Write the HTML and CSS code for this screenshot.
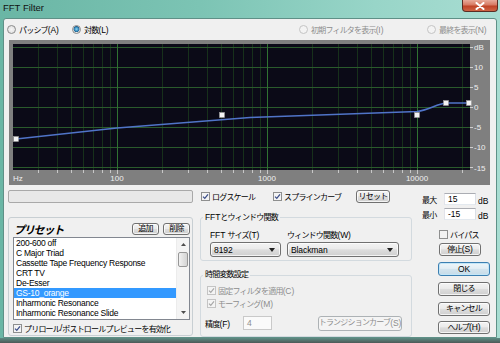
FILE: index.html
```html
<!DOCTYPE html>
<html lang="ja">
<head>
<meta charset="utf-8">
<title>FFT Filter</title>
<link rel="stylesheet" href="styles.css">
</head>
<body>
<div class="window">
  <div class="titlebar">
    <span class="title">FFT Filter</span>
    <span class="close"><svg width="12" height="8" viewBox="0 0 12 8"><path d="M2.5 1 L9.5 7 M9.5 1 L2.5 7" stroke="#fff" stroke-width="2" stroke-linecap="round"/></svg></span>
  </div>
  <div class="client">
    <div class="radio-row">
      <label class="opt r1"><span class="radio"></span>パッシブ<span class="en">(A)</span></label>
      <label class="opt r2"><span class="radio on"></span>対数<span class="en">(L)</span></label>
      <label class="opt r3 dis"><span class="radio off"></span>初期フィルタを表示<span class="en">(I)</span></label>
      <label class="opt r4 dis"><span class="radio off"></span>最終を表示<span class="en">(N)</span></label>
    </div>
    <div class="graph">
      <svg width="481" height="145" viewBox="0 0 481 145">
        <rect x="4" y="4" width="457" height="126" fill="#0b0a17"/>
        <path d="M29.5 4V130M48.5 4V130M62.5 4V130M74.5 4V130M84.5 4V130M93.5 4V130M101.5 4V130M153.5 4V130M179.5 4V130M198.5 4V130M212.5 4V130M224.5 4V130M234.5 4V130M243.5 4V130M251.5 4V130M303.5 4V130M329.5 4V130M348.5 4V130M362.5 4V130M374.5 4V130M384.5 4V130M393.5 4V130M401.5 4V130M453.5 4V130" stroke="#17301b" stroke-width="1"/>
        <path d="M4 7.5H461M4 27.5H461M4 47.5H461M4 67.5H461M4 87.5H461M4 107.5H461M4 127.5H461" stroke="#2a5a2c" stroke-width="1"/>
        <path d="M108.5 4V130M258.5 4V130M408.5 4V130" stroke="#307232" stroke-width="1"/>
        <path d="M29.5 130v3M48.5 130v3M62.5 130v3M74.5 130v3M84.5 130v3M93.5 130v3M101.5 130v3M108.5 130v4M153.5 130v3M179.5 130v3M198.5 130v3M212.5 130v3M224.5 130v3M234.5 130v3M243.5 130v3M251.5 130v3M258.5 130v4M303.5 130v3M329.5 130v3M348.5 130v3M362.5 130v3M374.5 130v3M384.5 130v3M393.5 130v3M401.5 130v3M408.5 130v4M453.5 130v3" stroke="#c8c8c8" stroke-width="1"/>
        <path d="M461 7.5h3M461 27.5h3M461 47.5h3M461 67.5h3M461 87.5h3M461 107.5h3M461 127.5h3" stroke="#d0d0d0" stroke-width="1"/>
        <g class="axis">
          <text x="4" y="141">Hz</text>
          <text x="108" y="141" text-anchor="middle">100</text>
          <text x="258" y="141" text-anchor="middle">1000</text>
          <text x="408" y="141" text-anchor="middle">10000</text>
          <text x="465" y="10">dB</text>
          <text x="465" y="30">10</text>
          <text x="465" y="50">5</text>
          <text x="465" y="70">0</text>
          <text x="465" y="90">-5</text>
          <text x="465" y="110">-10</text>
          <text x="465" y="131">-15</text>
        </g>
        <path d="M7 99 L108 88 L241 77.5 L408 71.5 C421 70 427 64 437 63 L460 63" fill="none" stroke="#5074c8" stroke-width="1.6"/>
        <g fill="#f4f4f4" stroke="#9a9a9a" stroke-width="0.6">
          <rect x="4.5" y="96.5" width="5" height="5"/>
          <rect x="210.5" y="72.5" width="5" height="5"/>
          <rect x="405.5" y="72.5" width="5" height="5"/>
          <rect x="434.5" y="60.5" width="5" height="5"/>
          <rect x="457.5" y="60.5" width="5" height="5"/>
        </g>
      </svg>
    </div>
    <div class="bottom">
      <div class="col-left">
        <div class="progress"></div>
        <div class="presets">
          <div class="preset-head">
            <span class="preset-title">プリセット</span>
            <button class="btn sm add">追加</button>
            <button class="btn sm">削除</button>
          </div>
          <div class="listbox">
            <ul class="items">
              <li>200-600 off</li>
              <li>C Major Triad</li>
              <li>Cassette Tape Frequency Response</li>
              <li>CRT TV</li>
              <li>De-Esser</li>
              <li class="sel">GS-10_orange</li>
              <li>Inharmonic Resonance</li>
              <li>Inharmonic Resonance Slide</li>
            </ul>
            <div class="scrollbar">
              <span class="arrow"><svg width="5" height="3" viewBox="0 0 5 3"><path d="M0 3L2.5 0L5 3Z" fill="#4d4d4d"/></svg></span>
              <span class="thumb"></span>
              <span class="track"></span>
              <span class="arrow"><svg width="5" height="3" viewBox="0 0 5 3"><path d="M0 0L2.5 3L5 0Z" fill="#4d4d4d"/></svg></span>
            </div>
          </div>
          <label class="chk preroll"><svg class="cb" viewBox="0 0 9 9"><rect x="0.5" y="0.5" width="8" height="8" fill="#f4f4f4" stroke="#8e8f8f"/><path d="M2 4.6L3.8 6.4L7 2.4" fill="none" stroke="#3d4f8a" stroke-width="1.3"/></svg>プリロール<span class="en">/</span>ポストロールプレビューを有効化</label>
        </div>
      </div>
      <div class="col-mid">
        <div class="mid-top">
          <label class="chk logscale"><svg class="cb" viewBox="0 0 9 9"><rect x="0.5" y="0.5" width="8" height="8" fill="#f4f4f4" stroke="#8e8f8f"/><path d="M2 4.6L3.8 6.4L7 2.4" fill="none" stroke="#3d4f8a" stroke-width="1.3"/></svg>ログスケール</label>
          <label class="chk spline"><svg class="cb" viewBox="0 0 9 9"><rect x="0.5" y="0.5" width="8" height="8" fill="#f4f4f4" stroke="#8e8f8f"/><path d="M2 4.6L3.8 6.4L7 2.4" fill="none" stroke="#3d4f8a" stroke-width="1.3"/></svg>スプラインカーブ</label>
          <button class="btn reset">リセット</button>
        </div>
        <fieldset class="grp fft">
          <legend><span class="en">FFT</span>とウィンドウ関数</legend>
          <div class="fft-body">
            <span class="lbl"><span class="en">FFT </span>サイズ<span class="en">(T)</span></span>
            <span class="lbl">ウィンドウ関数<span class="en">(W)</span></span>
            <div class="combo">8192<svg width="6" height="4" viewBox="0 0 6 4"><path d="M0 0H6L3 4Z" fill="#222"/></svg></div>
            <div class="combo">Blackman<svg width="6" height="4" viewBox="0 0 6 4"><path d="M0 0H6L3 4Z" fill="#222"/></svg></div>
          </div>
        </fieldset>
        <fieldset class="grp time">
          <legend>時間変数設定</legend>
          <label class="chk trow dis first"><svg class="cb" viewBox="0 0 9 9"><rect x="0.5" y="0.5" width="8" height="8" fill="#f4f4f4" stroke="#c4c4c4"/><path d="M2 4.6L3.8 6.4L7 2.4" fill="none" stroke="#a8a8a8" stroke-width="1.2"/></svg>固定フィルタを適用<span class="en">(C)</span></label>
          <label class="chk trow dis"><svg class="cb" viewBox="0 0 9 9"><rect x="0.5" y="0.5" width="8" height="8" fill="#f4f4f4" stroke="#c4c4c4"/><path d="M2 4.6L3.8 6.4L7 2.4" fill="none" stroke="#a8a8a8" stroke-width="1.2"/></svg>モーフィング<span class="en">(M)</span></label>
          <div class="prec-row">
            <span class="prec-lbl">精度<span class="en">(F)</span></span>
            <span class="input disabled">4</span>
            <button class="btn disabled trans">トランジションカーブ<span class="en">(S)</span></button>
          </div>
        </fieldset>
      </div>
      <div class="col-right">
        <div class="db-row first"><span class="db-lbl">最大</span><span class="input">15</span><span class="unit">dB</span></div>
        <div class="db-row"><span class="db-lbl">最小</span><span class="input">-15</span><span class="unit">dB</span></div>
        <label class="chk bypass"><svg class="cb" viewBox="0 0 9 9"><rect x="0.5" y="0.5" width="8" height="8" fill="#f2f2f2" stroke="#8e8f8f"/></svg>バイパス</label>
        <button class="btn stop">停止<span class="en">(S)</span></button>
        <button class="btn side default"><span class="en">OK</span></button>
        <button class="btn side">閉じる</button>
        <button class="btn side">キャンセル</button>
        <button class="btn side help">ヘルプ<span class="en">(H)</span></button>
      </div>
    </div>
  </div>
  <div class="bottom-frame"></div>
</div>
</body>
</html>
```

FILE: styles.css
```css
* { box-sizing: border-box; }
html, body { margin: 0; padding: 0; }
body {
  width: 500px;
  height: 343px;
  overflow: hidden;
  font-family: "Liberation Sans", "Noto Sans CJK JP", sans-serif;
  font-size: 8px;
  letter-spacing: -0.8px;
  color: #000;
  background: #6fb9a9;
}
.en { letter-spacing: -0.1px; font-size: 8.5px; }
.window {
  width: 500px;
  height: 343px;
  display: flex;
  flex-direction: column;
  background: linear-gradient(90deg, #6ab6a5 0%, #7cc4b4 40%, #98d5c8 75%, #a8ddd2 100%);
}
.titlebar {
  flex: none;
  height: 18px;
  display: flex;
  align-items: flex-start;
}
.title {
  padding-left: 3px;
  font-size: 9.5px;
  line-height: 15px;
  letter-spacing: 0;
  color: #111;
}
.close {
  margin-left: auto;
  margin-right: 2px;
  width: 36px;
  height: 12px;
  border: 1px solid #5a2d24;
  border-top: none;
  border-radius: 0 0 4px 4px;
  background: linear-gradient(#e8ab9b 0%, #d77a63 45%, #bf4327 55%, #cf6546 100%);
  display: flex;
  align-items: center;
  justify-content: center;
}
.close svg { display: block; }
.client {
  flex: none;
  height: 320px;
  margin: 0 3px;
  background: #f0f0f0;
  border: 1px solid #5f9087;
  border-radius: 3px 3px 0 0;
  display: flex;
  flex-direction: column;
}
.bottom-frame {
  flex: 1;
  background: linear-gradient(#5d8c83, #4d5857);
}

/* radio row */
.radio-row {
  height: 21px;
  display: flex;
  align-items: center;
  padding-left: 3px;
}
.opt { display: flex; align-items: center; white-space: nowrap; }
.r1 { width: 65px; }
.r2 { width: 227px; }
.r3 { width: 128px; }
.dis { color: #8d8d8d; }
.radio {
  width: 9px;
  height: 9px;
  border-radius: 50%;
  border: 1px solid #8a8b8b;
  background: radial-gradient(circle at 50% 50%, #f6f6f6 0, #dadada 100%);
  margin-right: 3px;
  flex: none;
}
.radio.on {
  background: radial-gradient(circle at 50% 45%, #8fd6f2 0, #3d93c4 1.8px, #1f5f8c 2.8px, #e9e9e9 3.2px, #d6d6d6 100%);
}
.radio.off { border-color: #c4c4c4; background: #f3f3f3; }

/* graph */
.graph {
  margin-left: 5px;
  width: 481px;
  height: 145px;
  background: #7f7f7f;
}
.graph svg { display: block; }
.axis text {
  font-family: "Liberation Sans", sans-serif;
  font-size: 8px;
  fill: #efefef;
  letter-spacing: 0;
}

/* bottom area */
.bottom {
  display: flex;
  margin-top: 3px;
  padding-left: 4px;
}
.col-left { width: 185px; margin-right: 7px; }
.col-mid { width: 212px; }
.col-right { width: 80px; padding-left: 8px; display: flex; flex-direction: column; }

.progress {
  margin-top: 2px;
  height: 13px;
  border: 1px solid #a9a9a9;
  border-radius: 2px;
  background: #e8e8e8;
}
.presets {
  margin-top: 14px;
  height: 119px;
  border: 1px solid #c8cfd3;
  border-radius: 3px;
}
.preset-head {
  margin-top: 4px;
  height: 13px;
  display: flex;
  align-items: center;
  padding-left: 5px;
  padding-right: 2px;
}
.preset-title {
  font-size: 11px;
  font-weight: bold;
  font-style: italic;
  letter-spacing: -1.2px;
}
.btn {
  display: flex;
  align-items: center;
  justify-content: center;
  border: 1px solid #707070;
  border-radius: 3px;
  background: linear-gradient(#f3f3f3 0%, #ebebeb 45%, #dddddd 52%, #cfcfcf 100%);
  box-shadow: inset 0 0 0 1px rgba(255, 255, 255, 0.75);
  font: inherit;
  letter-spacing: inherit;
  color: #000;
  padding: 0;
  margin: 0;
  line-height: 1;
  white-space: nowrap;
}
.btn.sm { width: 27px; height: 12px; }
.btn.add { margin-left: auto; margin-right: 4px; }
.listbox {
  margin-top: 2px;
  margin-left: 4px;
  width: 177px;
  height: 83px;
  border: 1px solid #828790;
  background: #fff;
  display: flex;
}
.items {
  list-style: none;
  margin: 0;
  padding: 0;
  flex: 1;
  min-width: 0;
}
.items li {
  height: 10px;
  line-height: 10px;
  padding-left: 2px;
  white-space: nowrap;
  overflow: hidden;
  font-size: 8.5px;
  letter-spacing: -0.25px;
}
.items li.sel { background: #3399ff; color: #fff; }
.scrollbar {
  width: 13px;
  display: flex;
  flex-direction: column;
  background: #f4f4f4;
  border-left: 1px solid #ececec;
}
.scrollbar .arrow {
  height: 13px;
  display: flex;
  align-items: center;
  justify-content: center;
}
.scrollbar .thumb {
  height: 15px;
  margin: 1px 1px 0;
  border: 1px solid #979797;
  border-radius: 2px;
  background: linear-gradient(90deg, #f2f2f2, #e2e2e2 50%, #d4d4d4);
}
.scrollbar .track { flex: 1; }

.chk { display: flex; align-items: center; white-space: nowrap; }
.cb { width: 9px; height: 9px; flex: none; margin-right: 2px; display: block; }
.preroll { margin-top: 3px; padding-left: 4px; height: 10px; }

/* middle */
.mid-top {
  height: 17px;
  display: flex;
  align-items: center;
  padding-left: 1px;
}
.logscale { width: 72px; }
.spline { width: 83px; }
.btn.reset { width: 34px; height: 13px; }

.grp {
  margin: 0;
  padding: 0;
  border: 1px solid #d3dadf;
  border-radius: 3px;
  min-width: 0;
  width: 212px;
}
.grp legend {
  padding: 0 2px;
  margin-left: 2px;
  line-height: 10px;
}
.fft { margin-top: 7px; }
.fft-body {
  display: grid;
  grid-template-columns: 71px 112px;
  column-gap: 6px;
  padding: 7px 0 3px 9px;
}
.lbl { line-height: 10px; }
.combo {
  margin-top: 1px;
  height: 15px;
  border: 1px solid #707070;
  border-radius: 3px;
  background: linear-gradient(#f3f3f3 0%, #ebebeb 45%, #dddddd 52%, #cfcfcf 100%);
  box-shadow: inset 0 0 0 1px rgba(255, 255, 255, 0.75);
  display: flex;
  align-items: center;
  justify-content: space-between;
  padding: 0 5px 0 3px;
  letter-spacing: -0.1px;
  font-size: 8.5px;
}
.combo svg { display: block; }
.time { margin-top: 9px; }
.trow { height: 11px; margin-top: 2px; padding-left: 6px; }
.trow.first { margin-top: 5px; }
.prec-row {
  margin-top: 6px;
  height: 16px;
  display: flex;
  align-items: center;
  padding-left: 4px;
  margin-bottom: 5px;
}
.prec-lbl { width: 38px; }
.input {
  height: 14px;
  width: 29px;
  background: #fff;
  border: 1px solid #abadb3;
  border-color: #abadb3 #dbdfe6 #e3e9ef #e2e3ea;
  display: flex;
  align-items: center;
  padding-left: 3px;
  letter-spacing: 0;
  font-size: 8.5px;
}
.input.disabled { color: #8d8d8d; border-color: #c9c9c9; background: #fafafa; }
.btn.disabled {
  border-color: #adb2b5;
  background: #f4f4f4;
  box-shadow: none;
  color: #8d8d8d;
}
.btn.trans { margin-left: 46px; width: 84px; height: 15px; }

/* right */
.db-row { display: flex; align-items: center; margin-top: 3px; height: 12px; }
.db-row.first { margin-top: 5px; }
.db-lbl { width: 24px; padding-left: 2px; }
.db-row .input { width: 32px; height: 12px; }
.unit { margin-left: 2px; padding-top: 3px; letter-spacing: 0; font-size: 8.5px; }
.bypass { margin-top: 9px; padding-left: 19px; height: 10px; }
.btn.stop { margin-top: 4px; margin-left: 19px; width: 42px; height: 13px; }
.btn.side { margin-top: 6px; margin-left: 18px; width: 52px; height: 14px; }
.btn.help { margin-top: 5px; height: 13px; }
.btn.default {
  border-color: #3c7fb1;
  background: linear-gradient(#eef6fa 0%, #e3eef4 45%, #d3e4ee 52%, #c6dbe8 100%);
  box-shadow: inset 0 0 0 1px #c4e6f7;
}
```
